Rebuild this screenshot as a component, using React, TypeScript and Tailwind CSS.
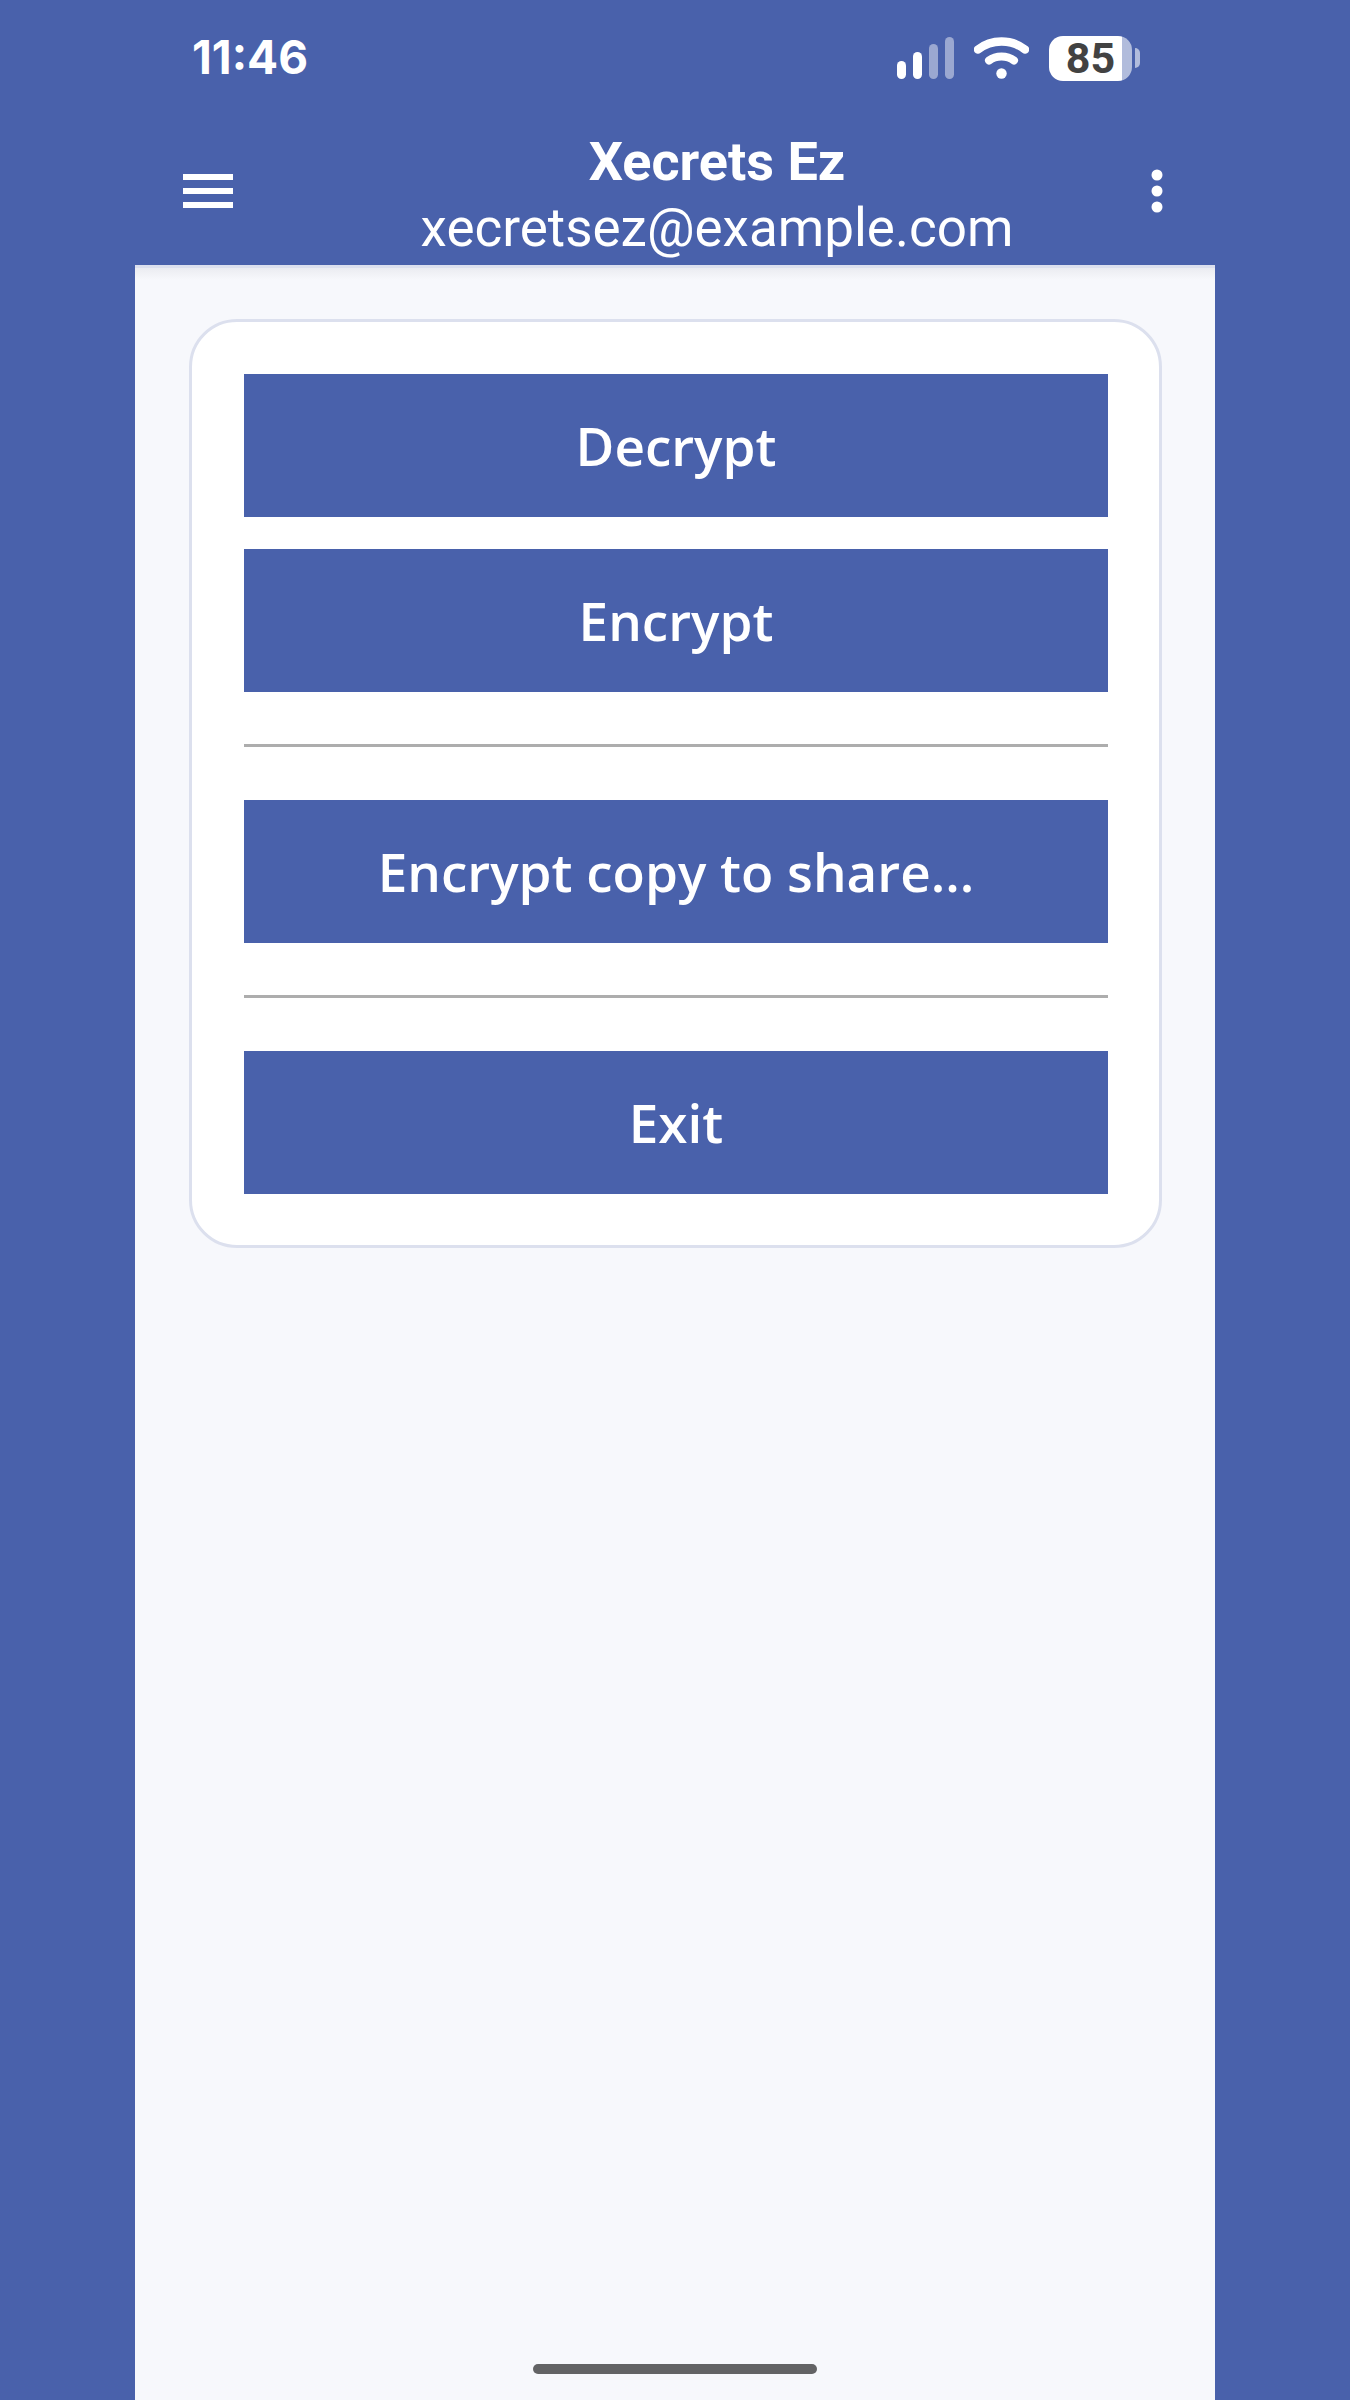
import { useState } from "react";

interface MenuAction {
  id: string;
  label: string;
  dividerBefore?: boolean;
}

const actions: MenuAction[] = [
  { id: "decrypt", label: "Decrypt" },
  { id: "encrypt", label: "Encrypt" },
  { id: "share", label: "Encrypt copy to share...", dividerBefore: true },
  { id: "exit", label: "Exit", dividerBefore: true },
];

function SignalIcon() {
  return (
    <svg width="57" height="42" viewBox="0 0 57 42" fill="#fff" aria-hidden="true">
      <rect x="0" y="24" width="9" height="18" rx="4.5" />
      <rect x="16" y="15" width="9" height="27" rx="4.5" />
      <rect x="32" y="7" width="9" height="35" rx="4.5" opacity="0.45" />
      <rect x="48" y="0" width="9" height="42" rx="4.5" opacity="0.45" />
    </svg>
  );
}

function WifiIcon() {
  return (
    <svg width="55" height="42" viewBox="0 0 55 42" fill="none" stroke="#fff" aria-hidden="true">
      <path d="M4 12.5C17.5 1.8 37.5 1.8 51 12.5" strokeWidth="8.5" strokeLinecap="round" />
      <path d="M15 23.5C22 18 33 18 40 23.5" strokeWidth="8" strokeLinecap="round" />
      <circle cx="27.5" cy="36.5" r="5.2" fill="#fff" stroke="none" />
    </svg>
  );
}

function Battery({ level }: { level: number }) {
  return (
    <div className="flex items-center gap-[3px]">
      <div className="h-[45px] w-[83px] rounded-[14px] bg-linear-to-r from-white from-88% to-[#b1bcdc] to-88% text-center font-['Roboto',sans-serif] text-[43px] font-bold leading-[45px] text-[#424242]">
        {level}
      </div>
      <div className="h-5 w-[5px] rounded-r-[5px] bg-[#b1bcdc]" />
    </div>
  );
}

function StatusBar() {
  return (
    <div className="flex h-[116px] items-center justify-between pl-[57px] pr-[75px]">
      <span className="pb-0.5 font-['Inter',sans-serif] text-[46px] font-bold leading-none">11:46</span>
      <div className="flex items-center gap-5">
        <SignalIcon />
        <WifiIcon />
        <Battery level={85} />
      </div>
    </div>
  );
}

function AppBar({ onMenu }: { onMenu: () => void }) {
  return (
    <div className="flex items-start pb-1 pt-[13px]">
      <button
        type="button"
        aria-label="Menu"
        onClick={onMenu}
        className="flex h-[124px] w-[200px] items-center pl-12"
      >
        <svg width="50" height="34" viewBox="0 0 50 34" fill="#fff" aria-hidden="true">
          <rect x="0" y="0" width="50" height="6" />
          <rect x="0" y="14" width="50" height="6" />
          <rect x="0" y="28" width="50" height="6" />
        </svg>
      </button>
      <div className="min-w-0 flex-1 text-center font-['Roboto',sans-serif]">
        <h1 className="text-[54px] font-bold leading-[66px]">Xecrets Ez</h1>
        <p className="text-[53px] leading-[66px]">xecretsez@example.com</p>
      </div>
      <button
        type="button"
        aria-label="More options"
        className="flex h-[124px] w-[116px] items-center justify-center"
      >
        <svg width="12" height="44" viewBox="0 0 12 44" fill="#fff" aria-hidden="true">
          <circle cx="6" cy="6" r="5.5" />
          <circle cx="6" cy="22" r="5.5" />
          <circle cx="6" cy="38" r="5.5" />
        </svg>
      </button>
    </div>
  );
}

export default function App() {
  const [menuOpen, setMenuOpen] = useState(false);

  return (
    <div className="flex min-h-screen flex-col bg-[#4961ab] px-[10%]">
      <header className="text-white">
        <StatusBar />
        <AppBar onMenu={() => setMenuOpen(!menuOpen)} />
      </header>

      <div className="flex flex-1 flex-col bg-[#f7f8fc]">
        {/* app bar shadow */}
        <div className="h-[3px] bg-[#dce0ee]" />
        <div className="h-3 bg-linear-to-b from-[#ebecf1] to-[#f7f8fc]" />

        <main className="flex-1 pl-[54px] pr-[53px] pt-[39px]">
          <div className="flex flex-col gap-8 rounded-[48px] border-3 border-[#dce0ee] bg-white pb-[51px] pl-[52px] pr-[51px] pt-[52px]">
            {actions.map((action) => (
              <div key={action.id}>
                {action.dividerBefore && (
                  <hr className="mb-[53px] mt-5 border-t-3 border-[#adadad]" />
                )}
                <button
                  type="button"
                  className="w-full bg-[#4961ab] py-[34px] font-['Open_Sans',sans-serif] text-[53px] font-semibold leading-[75px] text-white"
                >
                  {action.label}
                </button>
              </div>
            ))}
          </div>
        </main>

        <div className="flex justify-center pb-[26px]">
          <div className="h-[10px] w-[284px] rounded-full bg-[#636365]" />
        </div>
      </div>
    </div>
  );
}
